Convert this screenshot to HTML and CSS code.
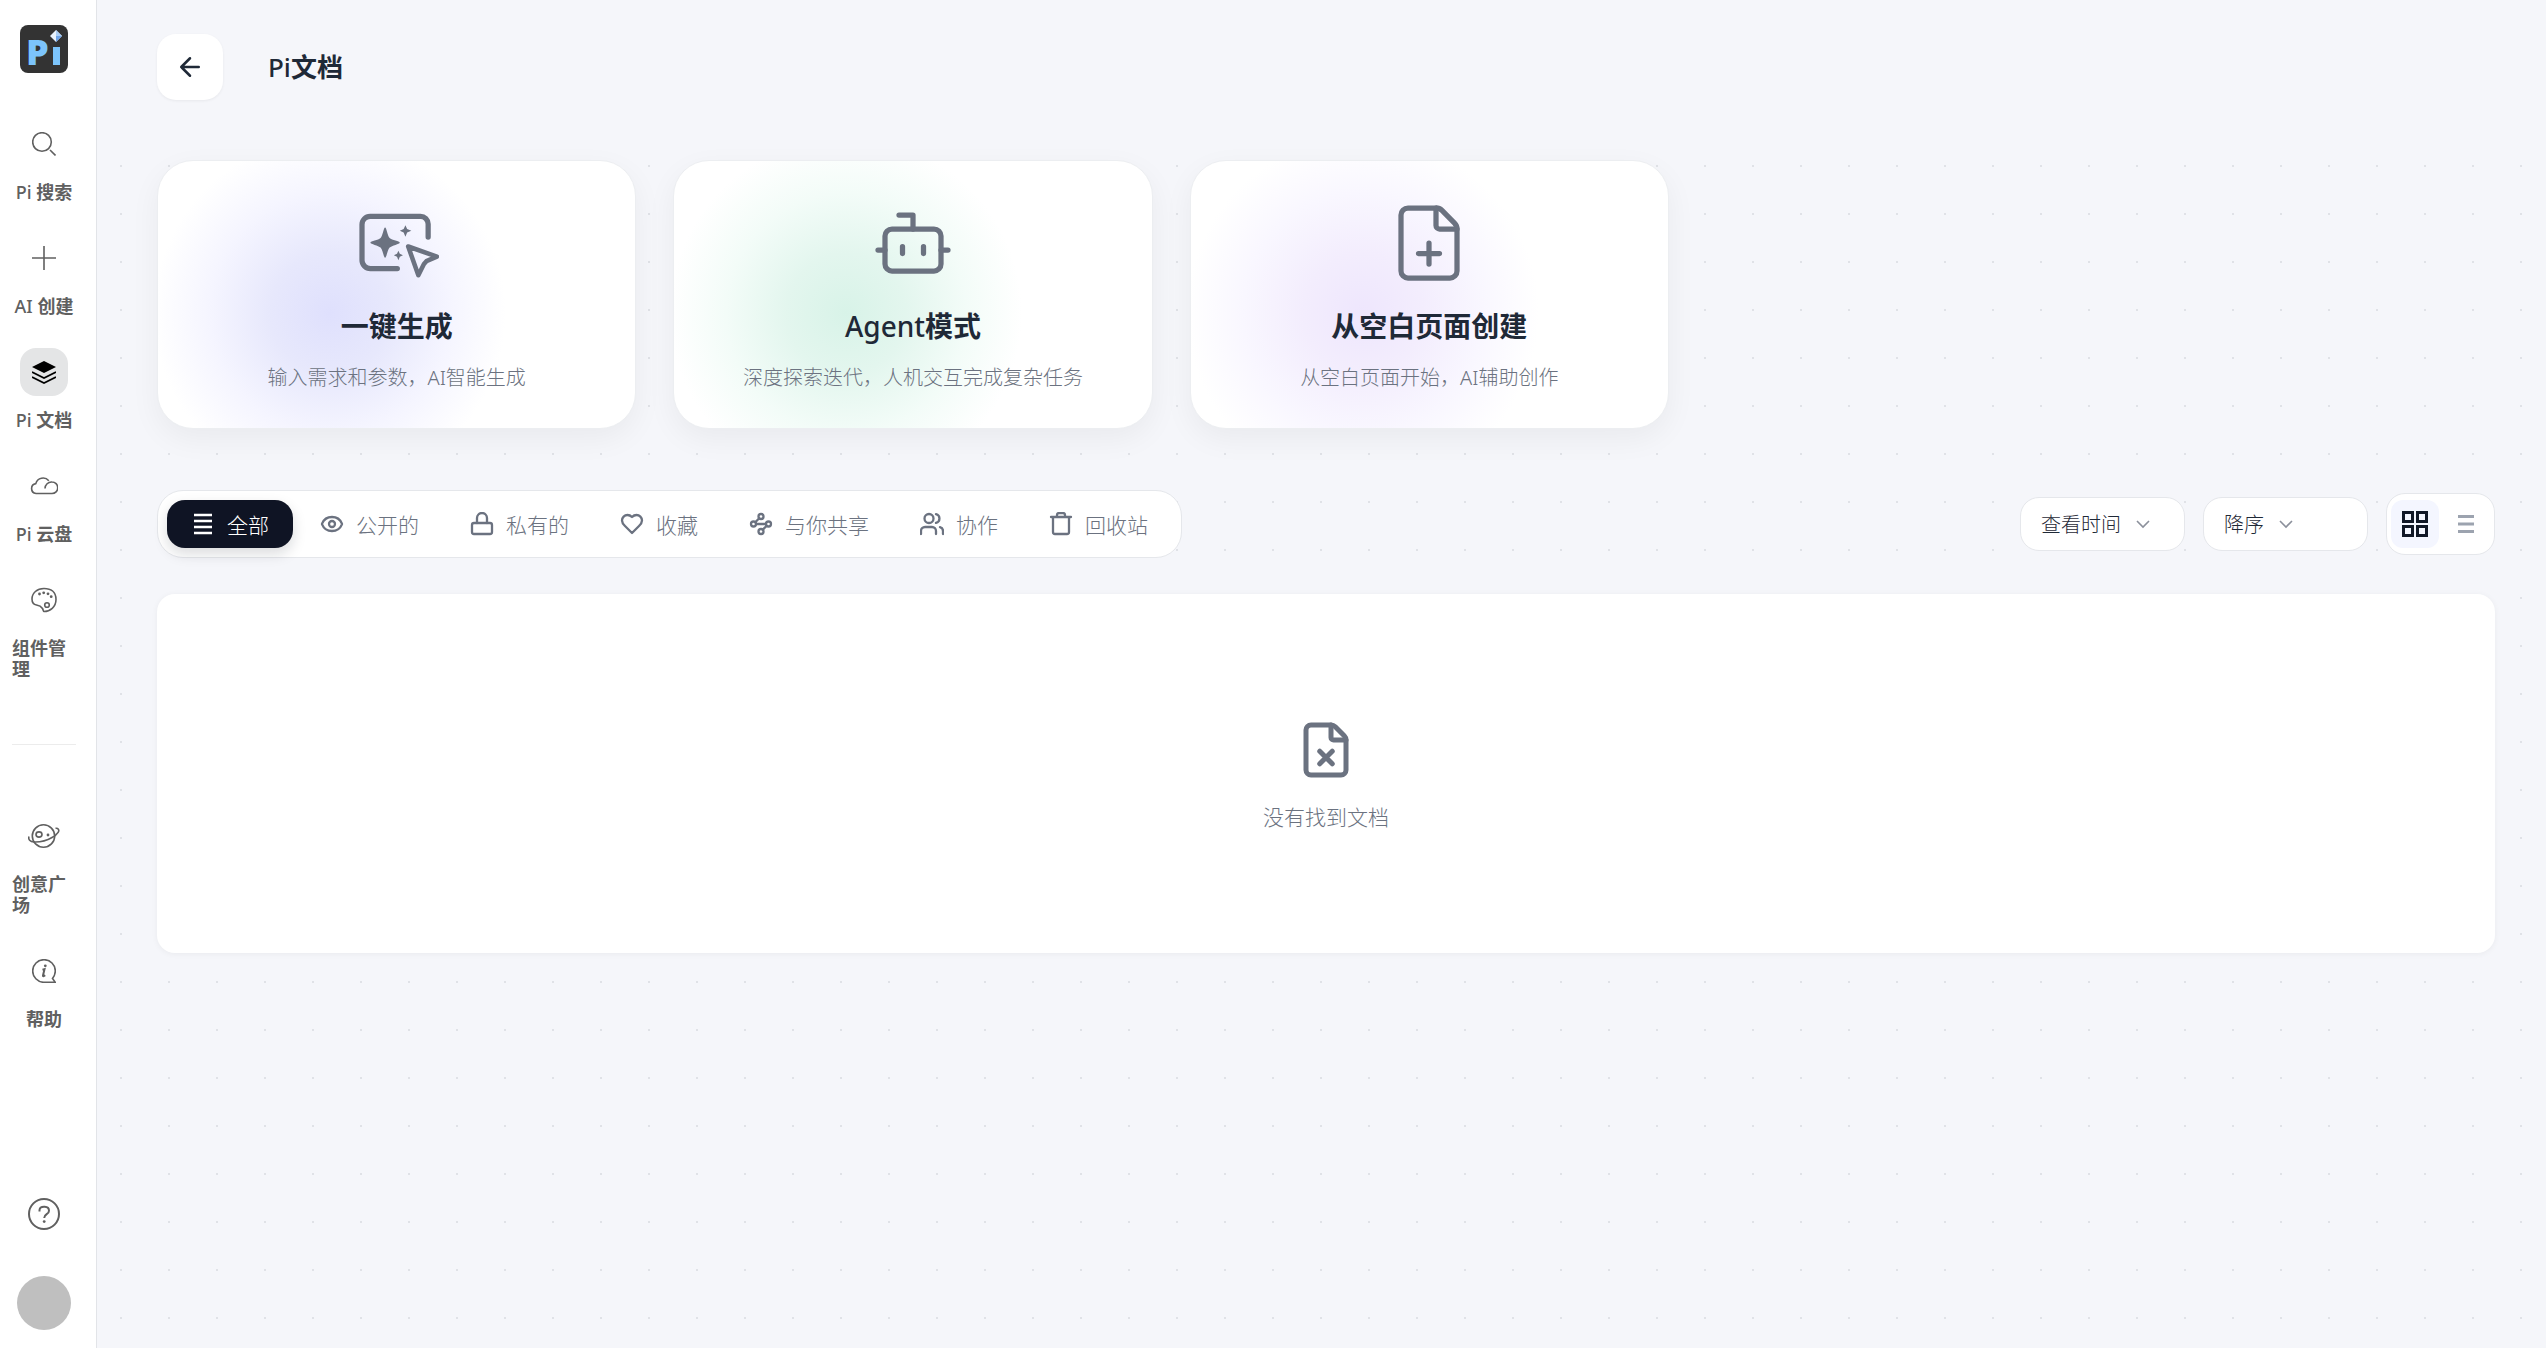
FILE: index.html
```html
<!DOCTYPE html>
<html lang="zh-CN">
<head>
    <meta charset="UTF-8">
    <meta name="viewport" content="width=device-width, initial-scale=1.0">
    <title>Pi文档</title>
    <link rel="stylesheet" href="styles.css">
</head>
<body>
    <aside class="sidebar">
        <a class="logo" href="#" aria-label="Pi">
            <svg viewBox="0 0 48 48" width="48" height="48">
                <rect width="48" height="48" rx="8" fill="#333333"/>
                <text class="logo-text" x="6" y="40">P</text>
                <rect x="33" y="22" width="7" height="18" fill="#7cc4fb"/>
                <path d="M30 11l6-6 6 6-6 6z" fill="#e8f2fd"/>
                <path d="M36 5l6 6h-6z" fill="#a9cdf5"/>
                <path d="M36 11h6l-6 6z" fill="#6fa4e8"/>
            </svg>
        </a>

        <nav class="side-nav">
            <a class="side-item" href="#">
                <span class="side-icon">
                    <svg viewBox="0 0 24 24" width="24" height="24"><circle cx="10" cy="10" r="9.3"/><path d="M18 18l5.5 5.5"/></svg>
                </span>
                <span class="side-label"><span class="latin">Pi</span> 搜索</span>
            </a>
            <a class="side-item" href="#">
                <span class="side-icon">
                    <svg viewBox="0 0 24 24" width="24" height="24"><path d="M12 0v24M0 12h24"/></svg>
                </span>
                <span class="side-label"><span class="latin">AI</span> 创建</span>
            </a>
            <a class="side-item active" href="#">
                <span class="side-icon">
                    <svg viewBox="0 0 24 24" width="24" height="24"><path class="fill" d="M12 1l12 6-12 6L0 7z"/><path d="M0 12l12 6 12-6M0 17l12 6 12-6"/></svg>
                </span>
                <span class="side-label"><span class="latin">Pi</span> 文档</span>
            </a>
            <a class="side-item" href="#">
                <span class="side-icon">
                    <svg viewBox="0 0 28 24" width="28" height="24"><path d="M6 19.500a5 5 0 0 1-.2-9.900A7.500 7.500 0 0 1 18.800 6.800M15 14.500a6.500 6.500 0 0 1 7-6.500 5.750 5.750 0 0 1 0 11.500H6"/></svg>
                </span>
                <span class="side-label"><span class="latin">Pi</span> 云盘</span>
            </a>
            <a class="side-item" href="#">
                <span class="side-icon">
                    <svg viewBox="0 0 26 26" width="26" height="26"><path d="M13 1.500C6 1.500 1 6 1 12c0 3.500 1.500 5.500 4.500 6 3 .5 4.500 1.200 6 3.500.8 1.500.8 3 1.500 3 6 0 12-4.500 12-12S20 1.500 13 1.500z"/><circle cx="16" cy="18" r="2.300"/><circle class="fill" cx="8.500" cy="7" r="1.400"/><circle class="fill" cx="12.700" cy="5.800" r="1.400"/><circle class="fill" cx="17" cy="6.800" r="1.400"/><circle class="fill" cx="20.200" cy="9.700" r="1.400"/></svg>
                </span>
                <span class="side-label">组件管理</span>
            </a>
        </nav>

        <hr class="side-divider">

        <nav class="side-nav">
            <a class="side-item" href="#">
                <span class="side-icon">
                    <svg viewBox="0 0 32 26" width="32" height="26"><circle cx="15.500" cy="13" r="11.200"/><path d="M1 13.500C0 16.500 2 18.800 6 19c6 .2 13-1.500 18-4.500 6-3 8.500-7.500 5.500-9-.6-.3-1.300-.3-2-.2"/><ellipse cx="11" cy="11.500" rx="3" ry="2.600"/><circle class="fill" cx="20" cy="12" r="1.400"/></svg>
                </span>
                <span class="side-label">创意广场</span>
            </a>
            <a class="side-item" href="#">
                <span class="side-icon">
                    <svg viewBox="0 0 24 24" width="24" height="24"><path d="M23.300 23.300H11.500A11.300 11.300 0 0 1 .7 12 11.300 11.300 0 0 1 12 .7 11.300 11.300 0 0 1 23.300 12c0 3-.9 5-2.800 7.500z"/><circle class="fill" cx="13.300" cy="6.800" r="1.400"/><path class="thick" d="M10.500 10.800l2-.6-1.500 6.300c-.2 1 .8.800 2.200-.2"/></svg>
                </span>
                <span class="side-label">帮助</span>
            </a>
        </nav>

        <div class="side-bottom">
            <button class="help-button" type="button" aria-label="帮助">
                <svg viewBox="0 0 32 32" width="32" height="32"><circle cx="16" cy="16" r="15"/><path d="M11.500 13.500V12A4.500 3.500 0 0 1 16 8.800h.8A4.500 4 0 0 1 21 12.700c0 4-4.800 3-4.800 7.300"/><circle class="fill" cx="16.200" cy="23.600" r="1.400"/></svg>
            </button>
            <button class="avatar" type="button" aria-label="用户"></button>
        </div>
    </aside>

    <main class="main">
        <header class="page-header">
            <button class="back-button" type="button" aria-label="返回">
                <svg class="line-icon" viewBox="0 0 24 24" width="30" height="30"><path d="M12 19l-7-7 7-7M19 12H5"/></svg>
            </button>
            <h1><span class="latin">Pi</span>文档</h1>
        </header>

        <div class="content">
            <section class="cards">
                <button class="card card-blue" type="button">
                    <svg class="card-icon" viewBox="0 0 24 24" width="84" height="84">
                        <path d="M20.900 10.300V6.600a2.200 2.200 0 0 0-2.200-2.200H4.300a2.300 2.300 0 0 0-2.300 2.300v10.200a2.400 2.400 0 0 0 2.400 2.400h7.700"/>
                        <path class="fill" d="M8.600 7.600c.4 0 .7 2.400 1.300 3 .6.600 2.900.9 2.900 1.300s-2.300.8-2.900 1.400c-.6.600-.9 2.900-1.300 2.900s-.7-2.300-1.300-2.900c-.6-.6-2.900-1-2.900-1.400s2.300-.7 2.900-1.300c.6-.6.9-3 1.300-3z"/>
                        <path class="fill" d="M14.400 6.900l.5 1.100 1.200.5-1.200.5-.5 1.200-.5-1.200-1.100-.5 1.100-.5zM12.400 14.200l.4.900.9.400-.9.400-.4 1-.4-1-.9-.4.900-.4z"/>
                        <path class="cursor" d="M15.200 13l8.200 2.900-3 1.300-.7.800-1.600 3.200z"/>
                    </svg>
                    <span class="card-title">一键生成</span>
                    <span class="card-text">输入需求和参数，AI智能生成</span>
                </button>
                <button class="card card-green" type="button">
                    <svg class="card-icon" viewBox="0 0 24 24" width="84" height="84">
                        <path d="M12 8V4H8"/><rect x="4" y="8" width="16" height="12" rx="2"/><path d="M2 14h2M20 14h2M15 13v2M9 13v2"/>
                    </svg>
                    <span class="card-title"><span class="latin">Agent</span>模式</span>
                    <span class="card-text">深度探索迭代，人机交互完成复杂任务</span>
                </button>
                <button class="card card-purple" type="button">
                    <svg class="card-icon" viewBox="0 0 24 24" width="84" height="84">
                        <path d="M6 22a2 2 0 0 1-2-2V4a2 2 0 0 1 2-2h8a2.400 2.400 0 0 1 1.704.706l3.588 3.588A2.400 2.400 0 0 1 20 8v12a2 2 0 0 1-2 2z"/><path d="M14 2v5a1 1 0 0 0 1 1h5M9 15h6M12 18v-6"/>
                    </svg>
                    <span class="card-title">从空白页面创建</span>
                    <span class="card-text">从空白页面开始，AI辅助创作</span>
                </button>
            </section>

            <section class="toolbar">
                <div class="tabs">
                    <button class="tab active" type="button">
                        <svg class="line-icon flat" viewBox="0 0 24 24" width="24" height="24"><path d="M3 3h18M3 9h18M3 15h18M3 21h18"/></svg>
                        全部
                    </button>
                    <button class="tab" type="button">
                        <svg class="line-icon" viewBox="0 0 24 24" width="24" height="24"><path d="M2.062 12.348a1 1 0 0 1 0-.696 10.750 10.750 0 0 1 19.876 0 1 1 0 0 1 0 .696 10.750 10.750 0 0 1-19.876 0"/><circle cx="12" cy="12" r="3"/></svg>
                        公开的
                    </button>
                    <button class="tab" type="button">
                        <svg class="line-icon" viewBox="0 0 24 24" width="24" height="24"><rect x="2" y="11" width="20" height="11" rx="2"/><path d="M7 11V6a5 5 0 0 1 10 0v5"/></svg>
                        私有的
                    </button>
                    <button class="tab" type="button">
                        <svg class="line-icon" viewBox="0 0 24 24" width="24" height="24"><path d="M19 14c1.490-1.460 3-3.210 3-5.500A5.500 5.500 0 0 0 16.500 3c-1.760 0-3 .5-4.500 2-1.500-1.500-2.740-2-4.500-2A5.500 5.500 0 0 0 2 8.500c0 2.300 1.500 4.050 3 5.500l7 7Z"/></svg>
                        收藏
                    </button>
                    <button class="tab" type="button">
                        <svg class="line-icon" viewBox="0 0 24 24" width="24" height="24"><circle cx="12" cy="4.500" r="2.500"/><path d="M10.200 6.300l-3.900 3.900"/><circle cx="4.500" cy="12" r="2.500"/><path d="M7 12h10"/><circle cx="19.500" cy="12" r="2.500"/><path d="M13.800 17.700l3.900-3.900"/><circle cx="12" cy="19.500" r="2.500"/></svg>
                        与你共享
                    </button>
                    <button class="tab" type="button">
                        <svg class="line-icon" viewBox="0 0 24 24" width="24" height="24"><path d="M16 22v-3a4 4 0 0 0-4-4H5a4 4 0 0 0-4 4v3"/><circle cx="9" cy="6.500" r="4.500"/><path d="M23 22v-3a4 4 0 0 0-3-3.870M16 2.130a4.500 4.500 0 0 1 0 8.750"/></svg>
                        协作
                    </button>
                    <button class="tab" type="button">
                        <svg class="line-icon" viewBox="0 0 24 24" width="24" height="24"><path d="M2 5h20M4 5v15a2 2 0 0 0 2 2h12a2 2 0 0 0 2-2V5M8 5V3a2 2 0 0 1 2-2h4a2 2 0 0 1 2 2v2"/></svg>
                        回收站
                    </button>
                </div>

                <div class="tools">
                    <label class="select-box">
                        <select aria-label="排序字段">
                            <option>查看时间</option>
                        </select>
                        <svg viewBox="0 0 14 14" width="14" height="14"><path d="M1 4l6 6 6-6"/></svg>
                    </label>
                    <label class="select-box">
                        <select aria-label="排序方式">
                            <option>降序</option>
                        </select>
                        <svg viewBox="0 0 14 14" width="14" height="14"><path d="M1 4l6 6 6-6"/></svg>
                    </label>
                    <div class="view-toggle">
                        <button class="view-button active" type="button" aria-label="网格">
                            <svg viewBox="0 0 26 26" width="26" height="26"><path d="M1.500 1.500h9v9h-9zM15.500 1.500h9v9h-9zM1.500 15.500h9v9h-9zM15.500 15.500h9v9h-9z"/></svg>
                        </button>
                        <button class="view-button" type="button" aria-label="列表">
                            <svg viewBox="0 0 26 26" width="26" height="26"><path d="M5 5.500h16M5 13h16M5 20.500h16"/></svg>
                        </button>
                    </div>
                </div>
            </section>

            <section class="empty">
                <svg class="line-icon" viewBox="0 0 24 24" width="60" height="60"><path d="M6 22a2 2 0 0 1-2-2V4a2 2 0 0 1 2-2h8a2.400 2.400 0 0 1 1.704.706l3.588 3.588A2.400 2.400 0 0 1 20 8v12a2 2 0 0 1-2 2z"/><path d="M14 2v5a1 1 0 0 0 1 1h5M14.500 12.500l-5 5M9.500 12.500l5 5"/></svg>
                <p>没有找到文档</p>
            </section>
        </div>
    </main>
</body>
</html>
```
FILE: styles.css
```css
* {
    box-sizing: border-box;
}
body {
    display: flex;
    min-height: 100vh;
    margin: 0;
    font-family: "Noto Sans", "Noto Sans CJK SC", sans-serif;
    background-color: #f5f6fa;
    color: #1f2937;
}
button, select {
    font-family: inherit;
    border: none;
    background: none;
    padding: 0;
    cursor: pointer;
}
svg {
    flex-shrink: 0;
    fill: none;
    stroke: currentColor;
}
svg .fill {
    fill: currentColor;
    stroke: none;
}
.line-icon {
    stroke-width: 2;
    stroke-linecap: round;
    stroke-linejoin: round;
}
.flat {
    stroke-linecap: butt;
}
.latin {
    font-weight: 500;
}

/* sidebar */
.sidebar {
    position: sticky;
    top: 0;
    display: flex;
    flex-direction: column;
    flex-shrink: 0;
    width: 97px;
    height: 100vh;
    padding: 25px 20px 18px 12px;
    background-color: #fff;
    border-right: 1px solid #e2e4e8;
    color: #606060;
}
.logo {
    height: 48px;
    margin: 0 auto 47px;
}
.logo svg {
    display: block;
    overflow: visible;
    stroke: none;
}
.logo-text {
    font-family: "Open Sans", sans-serif;
    font-size: 36px;
    font-weight: 800;
    fill: #7cc4fb;
}
.side-nav {
    display: flex;
    flex-direction: column;
    gap: 31px;
}
.side-item {
    display: flex;
    flex-direction: column;
    align-items: center;
    gap: 14px;
    color: inherit;
    text-decoration: none;
}
.side-icon {
    display: flex;
    align-items: center;
    justify-content: center;
    width: 48px;
    height: 48px;
    border-radius: 16px;
}
.side-icon svg {
    stroke-width: 1.6;
}
.side-icon .thick {
    stroke-width: 2;
}
.side-item.active .side-icon {
    background-color: #e4e5e6;
    color: #000;
}
.side-label {
    font-size: 18px;
    font-weight: 600;
    line-height: 21px;
}
.side-divider {
    width: 100%;
    margin: 64px 0 67px;
    border: none;
    border-top: 1px solid #ececec;
}
.side-bottom {
    display: flex;
    flex-direction: column;
    align-items: center;
    gap: 46px;
    margin-top: auto;
}
.help-button {
    height: 32px;
    color: #606060;
}
.help-button svg {
    display: block;
    stroke-width: 2;
}
.avatar {
    width: 54px;
    height: 54px;
    border-radius: 50%;
    background-color: #bfbfbf;
}

/* main */
.main {
    flex: 1;
    display: flex;
    flex-direction: column;
    min-width: 0;
}
.page-header {
    display: flex;
    align-items: center;
    gap: 45px;
    padding: 34px 60px 42px;
}
.back-button {
    display: flex;
    align-items: center;
    justify-content: center;
    width: 66px;
    height: 66px;
    border-radius: 19px;
    background-color: #fff;
    box-shadow: 0 1px 3px rgba(0,0,0,0.06);
    color: #1f2937;
}
.page-header h1 {
    margin: 0;
    font-size: 26px;
    font-weight: 600;
    line-height: 32px;
}
.content {
    flex: 1;
    padding: 18px 51px 48px 60px;
    background-image: radial-gradient(circle, #e0e2e7 1px, transparent 1px);
    background-size: 48px 48px;
}

/* create cards */
.cards {
    display: grid;
    grid-template-columns: repeat(3, 1fr);
    gap: 37px;
    max-width: 1512px;
}
.card {
    display: flex;
    flex-direction: column;
    align-items: center;
    padding: 40px 24px 35px;
    border: 1px solid #eceef1;
    border-radius: 36px;
    background-color: #fff;
    box-shadow: 0 10px 30px rgba(0,0,0,0.05);
}
.card-blue {
    background-image: radial-gradient(circle at 36% 57%, #dfe0fd, #e7e8fc 60px, #f5f5ff 120px, #fff 176px);
}
.card-green {
    background-image: radial-gradient(circle at 36% 57%, #d8f3e8, #e3f6ee 60px, #f3fcf8 120px, #fff 176px);
}
.card-purple {
    background-image: radial-gradient(circle at 36% 57%, #eee6fd, #f3edfd 60px, #f9f7ff 120px, #fff 176px);
}
.card-icon {
    color: #6b7280;
    stroke-width: 1.5;
    stroke-linecap: round;
    stroke-linejoin: round;
}
.card-icon .cursor {
    stroke-width: 1.3;
}
.card-title {
    margin-top: 23px;
    font-size: 28px;
    font-weight: 600;
    line-height: 36px;
    color: #1f2937;
}
.card-text {
    margin-top: 19px;
    font-size: 20px;
    font-weight: 300;
    line-height: 30px;
    color: #6b7280;
}

/* filter row */
.toolbar {
    display: flex;
    align-items: center;
    justify-content: space-between;
    margin: 61px 0 36px;
}
.tabs {
    display: flex;
    gap: 3px;
    padding: 9px;
    border: 1px solid #e5e7eb;
    border-radius: 26px;
    background-color: #fff;
}
.tab {
    display: flex;
    align-items: center;
    gap: 12px;
    height: 48px;
    padding: 0 24px;
    border-radius: 18px;
    font-size: 21px;
    font-weight: 300;
    color: #6b7280;
}
.tab.active {
    background-color: #0f1424;
    color: #fff;
    box-shadow: 0 6px 14px rgba(15,20,36,0.15);
}
.tab .line-icon {
    stroke-width: 2.3;
}
.tools {
    display: flex;
    align-items: center;
    gap: 18px;
}
.select-box {
    display: flex;
    align-items: center;
    gap: 15px;
    min-width: 165px;
    height: 54px;
    padding: 0 20px;
    border: 1px solid #e5e7eb;
    border-radius: 19px;
    background-color: #fff;
    color: #8b909b;
}
.select-box svg {
    stroke-width: 1.6;
}
.select-box select {
    appearance: none;
    field-sizing: content;
    font-size: 20px;
    font-weight: 300;
    color: #1f2937;
}
.view-toggle {
    display: flex;
    gap: 3px;
    padding: 6px 4px;
    border: 1px solid #e5e7eb;
    border-radius: 19px;
    background-color: #fff;
}
.view-button {
    display: flex;
    align-items: center;
    justify-content: center;
    width: 48px;
    height: 48px;
    border-radius: 12px;
    color: #9ca3af;
    stroke-width: 3;
}
.view-button.active {
    background-color: #f4f6ff;
    color: #111827;
}

/* empty list */
.empty {
    display: flex;
    flex-direction: column;
    align-items: center;
    gap: 22px;
    padding: 126px 24px 121px;
    border-radius: 18px;
    background-color: #fff;
    box-shadow: 0 1px 6px rgba(0,0,0,0.05);
    color: #6b7280;
}
.empty p {
    margin: 0;
    font-size: 21px;
    font-weight: 300;
    line-height: 30px;
}
```
